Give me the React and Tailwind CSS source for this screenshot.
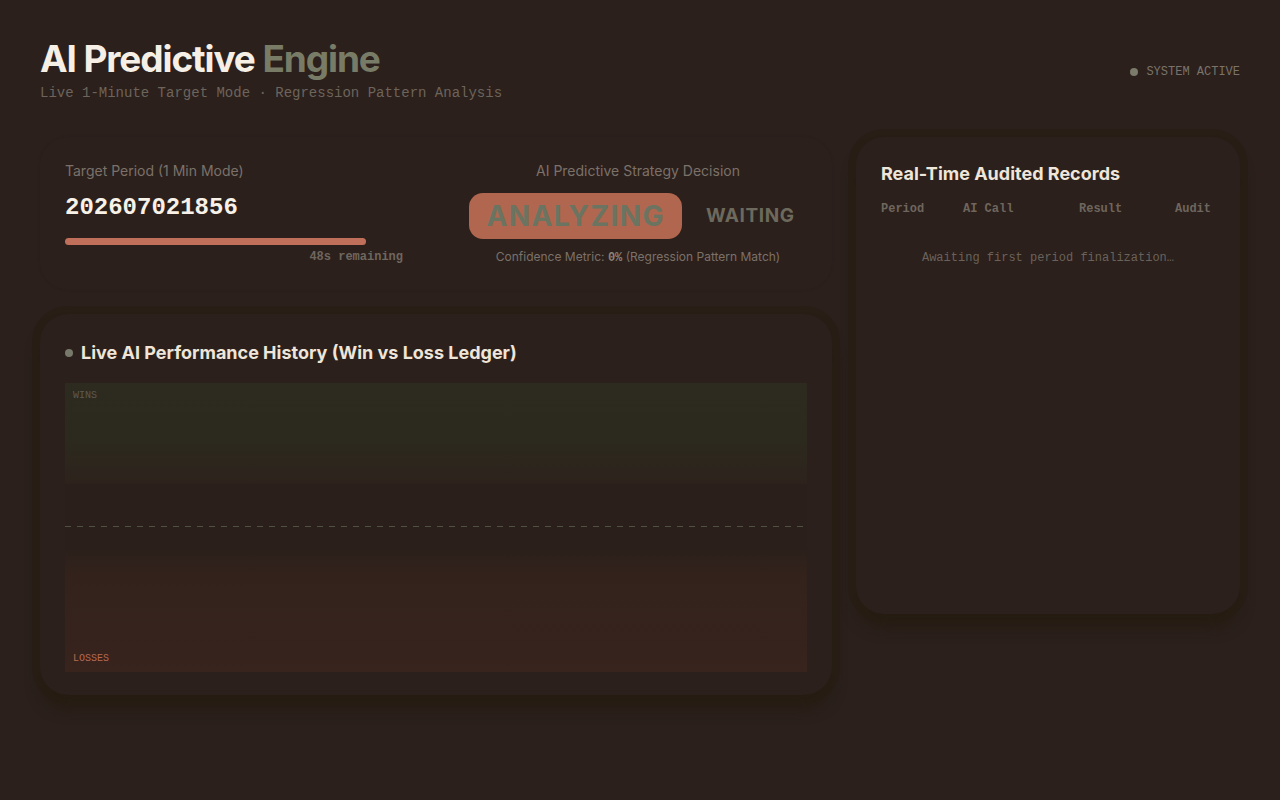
import React from "react";

const sans = { fontFamily: "Inter, 'Noto Sans', sans-serif" };
const mono = { fontFamily: "'Liberation Mono', 'DejaVu Sans Mono', monospace" };

export default function App() {
  const progress = 0.89;
  return (
    <div className="min-h-[800px] w-full bg-[#2b201c] px-10 pt-[36px]" style={sans}>
      {/* Header */}
      <div className="flex items-start justify-between">
        <div>
          <h1 className="text-[37px] font-bold leading-[45px] tracking-[-0.03em] text-[#f6efe6]">
            AI Predictive <span className="text-[#787c67]">Engine</span>
          </h1>
          <p className="mt-[2px] text-[14px] leading-[20px] text-[#6d645b]" style={mono}>
            Live 1-Minute Target Mode · Regression Pattern Analysis
          </p>
        </div>
        <div className="mt-[28px] flex items-center gap-[8px]">
          <span className="h-[8px] w-[8px] rounded-full bg-[#7a7b6a]" />
          <span className="text-[12px] leading-[16px] text-[#7a736a]" style={mono}>SYSTEM ACTIVE</span>
        </div>
      </div>

      {/* Main grid */}
      <div className="mt-[34px] grid grid-cols-[792px_384px] gap-6">
        {/* Left column */}
        <div className="flex flex-col gap-[24px]">
          {/* Top card */}
          <div className="rounded-[28px] bg-[#2b201c] px-[25px] py-[24px] shadow-[0_0_3px_rgba(20,14,6,0.1)]">
            <div className="grid grid-cols-[338px_338px] gap-[66px]">
              <div className="flex flex-col">
                <div className="text-[14px] leading-[20px] text-[#7b7169]">Target Period (1 Min Mode)</div>
                <div className="mt-[11px] text-[24px] font-bold leading-[32px] text-[#f7f1e8]" style={mono}>
                  202607021856
                </div>
                <div className="mt-[14px] h-[7px] w-full rounded-full">
                  <div className="h-full rounded-full bg-[#c0705a]" style={{ width: `${progress * 100}%` }} />
                </div>
                <div className="mt-[4px] text-right text-[12px] font-bold leading-[16px] text-[#6f665e]" style={mono}>
                  48s remaining
                </div>
              </div>
              <div className="flex flex-col items-center">
                <div className="text-[14px] leading-[20px] text-[#7b7169]">AI Predictive Strategy Decision</div>
                <div className="mt-[12px] flex items-center gap-[12px]">
                  <div className="rounded-[14px] bg-[#b0664f] px-[17px] py-[6px] text-[28px] font-bold leading-[34px] tracking-[0.05em] text-[#6b7461]">
                    ANALYZING
                  </div>
                  <div className="px-[12px] py-[6px] text-[19px] font-bold leading-[34px] tracking-[0.03em] text-[#6d6a5d]">
                    WAITING
                  </div>
                </div>
                <div className="mt-[10px] text-[12px] leading-[16px] text-[#7b7169]">
                  Confidence Metric: <span className="font-bold text-[#8a8178]" style={mono}>0%</span> (Regression Pattern Match)
                </div>
              </div>
            </div>
          </div>

          {/* Bottom card */}
          <div className="rounded-[28px] bg-[#2b201c] px-[25px] pb-[23px] pt-[25px] shadow-[0_0_0_8px_rgba(38,28,16,0.5),0_14px_14px_rgba(36,26,14,0.65)]">
            <div className="flex items-center gap-[8px]">
              <span className="h-[8px] w-[8px] rounded-full bg-[#777a6a]" />
              <h2 className="text-[18px] font-bold leading-[28px] text-[#efe5d8]">
                Live AI Performance History (Win vs Loss Ledger)
              </h2>
            </div>
            <div className="mt-[16px] flex h-[289px] flex-col bg-[#2a1f1b]">
              <div className="relative h-[101px] bg-[linear-gradient(180deg,#2d2b20_0%,#2c2a1f_50%,#2d231c_100%)]">
                <span className="absolute left-[8px] top-[7px] text-[10px] leading-[12px] text-[#5f5951]" style={mono}>WINS</span>
              </div>
              <div className="h-[66px] pt-[42px]">
                <div className="h-px w-full bg-[repeating-linear-gradient(90deg,#4f5243_0px,#4f5243_6px,transparent_6px,transparent_12px)]" />
              </div>
              <div className="relative flex-1 bg-[linear-gradient(180deg,#2b201b_0%,#33221c_20%,#38231d_100%)]">
                <span className="absolute bottom-[7px] left-[8px] text-[10px] leading-[12px] text-[#b66a50]" style={mono}>LOSSES</span>
              </div>
            </div>
          </div>
        </div>

        {/* Right card */}
        <div className="h-[477px] rounded-[28px] bg-[#2b201c] px-[25px] pt-[23px] shadow-[0_0_0_8px_rgba(38,28,16,0.5),0_14px_14px_rgba(36,26,14,0.65)]">
          <h2 className="text-[18px] font-bold leading-[28px] text-[#efe5d8]">Real-Time Audited Records</h2>
          <div
            className="mt-[13px] grid grid-cols-[82px_116px_96px_1fr] text-[12px] font-bold leading-[16px] text-[#6e665e]"
            style={mono}
          >
            <span>Period</span>
            <span>AI Call</span>
            <span>Result</span>
            <span>Audit</span>
          </div>
          <div className="mt-[33px] text-center text-[12px] leading-[16px] text-[#6a625a]" style={mono}>
            Awaiting first period finalization…
          </div>
        </div>
      </div>
    </div>
  );
}
